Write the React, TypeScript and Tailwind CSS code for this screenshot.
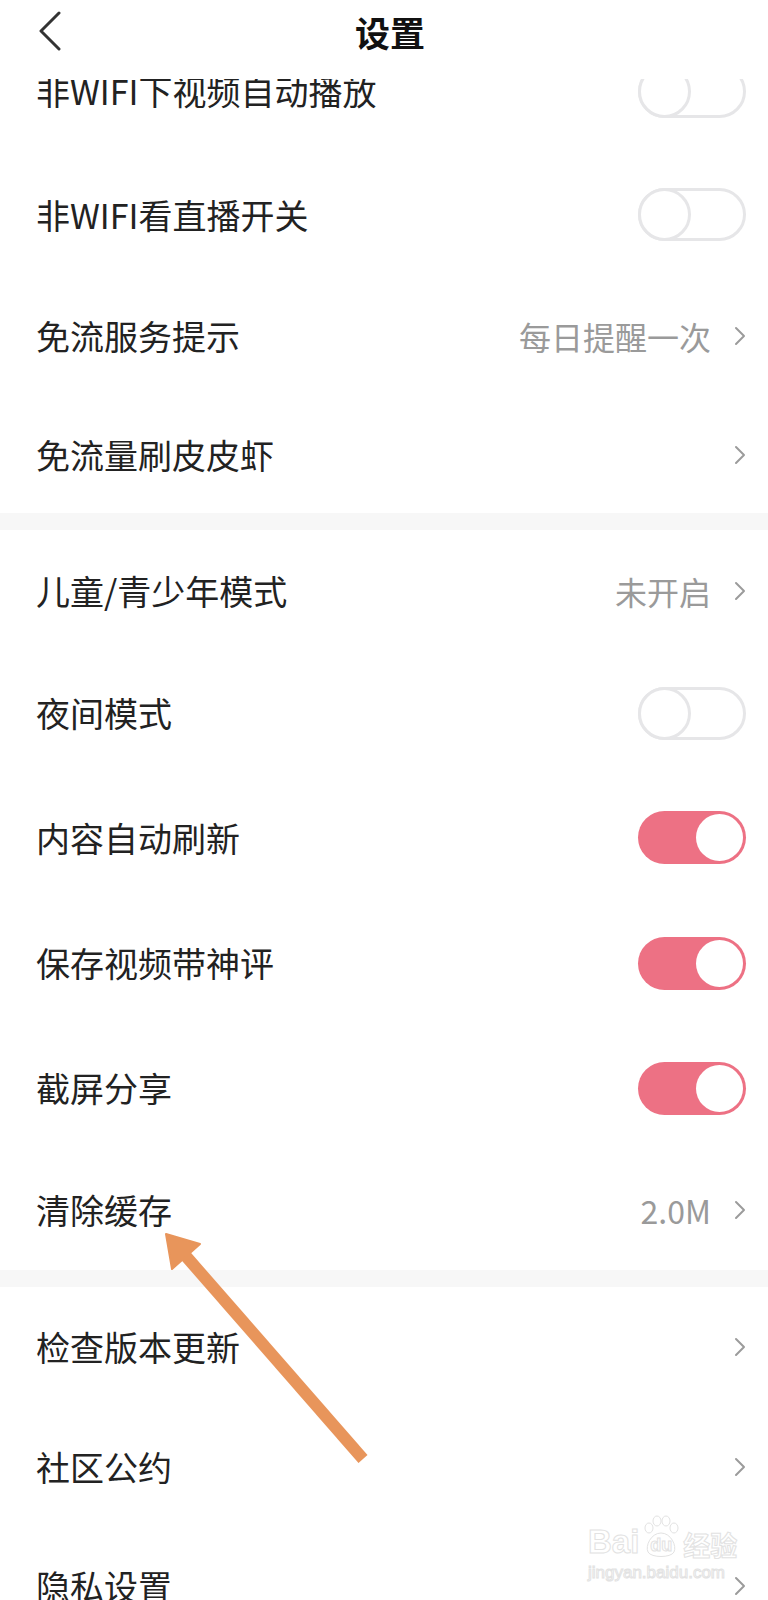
import React from "react";

type Row = {
  label: string;
  h: number;
  toggle?: boolean;
  on?: boolean;
  value?: string;
  arrow?: boolean;
};

const FONT = "font-['Noto_Sans_CJK_SC','Noto_Sans',sans-serif]";

const SECTIONS: Row[][] = [
  [
    { label: "非WIFI下视频自动播放", h: 124, toggle: true },
    { label: "非WIFI看直播开关", h: 123, toggle: true },
    { label: "免流服务提示", h: 120, value: "每日提醒一次", arrow: true },
    { label: "免流量刷皮皮虾", h: 117, arrow: true },
  ],
  [
    { label: "儿童/青少年模式", h: 121, value: "未开启", arrow: true },
    { label: "夜间模式", h: 124, toggle: true },
    { label: "内容自动刷新", h: 125, toggle: true, on: true },
    { label: "保存视频带神评", h: 126, toggle: true, on: true },
    { label: "截屏分享", h: 124, toggle: true, on: true },
    { label: "清除缓存", h: 120, value: "2.0M", arrow: true },
  ],
  [
    { label: "检查版本更新", h: 120, arrow: true },
    { label: "社区公约", h: 119, arrow: true },
    { label: "隐私设置", h: 120, arrow: true },
  ],
];

function Chevron() {
  return (
    <svg width="12" height="20" viewBox="0 0 12 20" fill="none">
      <path d="M2 2 L10 10 L2 18" stroke="#9b9b9b" strokeWidth="2" strokeLinecap="round" strokeLinejoin="round" />
    </svg>
  );
}

function Toggle({ on }: { on?: boolean }) {
  if (on) {
    return (
      <div className="relative h-[53px] w-[108px] rounded-full bg-[#ed7184]">
        <div className="absolute right-[3px] top-[3px] h-[47px] w-[47px] rounded-full bg-white" />
      </div>
    );
  }
  return (
    <div className="relative h-[53px] w-[108px] rounded-full border-[3px] border-[#e6e6e8] bg-white">
      <div className="absolute -left-[3px] -top-[3px] h-[53px] w-[53px] rounded-full border-[3px] border-[#e6e6e8] bg-white" />
    </div>
  );
}

function SettingRow({ row }: { row: Row }) {
  return (
    <div className="flex items-center justify-between pl-[36px] pr-[22px]" style={{ height: row.h }}>
      <span className="text-[34px] leading-none text-[#222222]">{row.label}</span>
      <div className="flex items-center">
        {row.value && <span className="mr-[23px] text-[32px] leading-none text-[#9a9a9a]">{row.value}</span>}
        {row.arrow && <Chevron />}
        {row.toggle && <Toggle on={row.on} />}
      </div>
    </div>
  );
}

function Watermark() {
  const stroke = "text-white [-webkit-text-stroke:1px_#e2e2e2]";
  return (
    <div className="pointer-events-none absolute left-[588px] top-[1514px] flex flex-col items-start">
      <div className="flex items-end">
        <span className={`font-['Liberation_Sans',sans-serif] text-[33px] font-bold leading-none ${stroke}`}>Bai</span>
        <div className="relative mx-[2px] flex h-[44px] w-[40px] items-end justify-center">
          <svg className="absolute left-0 top-0" width="40" height="44" viewBox="0 0 40 44" fill="white" stroke="#e2e2e2" strokeWidth="1">
            <ellipse cx="8" cy="14" rx="4" ry="5" />
            <ellipse cx="16" cy="7" rx="4" ry="5" />
            <ellipse cx="25" cy="7" rx="4" ry="5" />
            <ellipse cx="33" cy="14" rx="4" ry="5" />
            <path d="M20 19 C10 19 4 32 7 38 C10 44 30 44 33 38 C36 32 30 19 20 19 Z" />
          </svg>
          <span className={`relative mb-[4px] font-['Liberation_Sans',sans-serif] text-[18px] font-bold leading-none ${stroke}`}>du</span>
        </div>
        <span className={`font-['Noto_Sans_CJK_SC',sans-serif] text-[27px] font-bold leading-none ${stroke}`}>经验</span>
      </div>
      <span className={`mt-[6px] font-['Liberation_Sans',sans-serif] text-[17px] leading-none ${stroke}`}>jingyan.baidu.com</span>
    </div>
  );
}

export default function App() {
  return (
    <div className={`relative h-[1600px] w-[768px] overflow-hidden bg-white ${FONT}`}>
      <header className="absolute left-0 right-0 top-0 z-10 flex h-[79px] items-start bg-white pt-[11px]">
        <div className="w-[100px] pl-[38px]">
          <svg width="26" height="40" viewBox="0 0 26 40" fill="none">
            <path d="M21 2 L3 20 L21 38" stroke="#333333" strokeWidth="3" strokeLinecap="round" strokeLinejoin="round" />
          </svg>
        </div>
        <h1 className="flex-1 pt-[2px] text-center text-[35px] font-bold leading-[38px] text-[#111111]">设置</h1>
        <div className="w-[88px]" />
      </header>

      <div className="flex flex-col pt-[29px]">
        {SECTIONS.map((rows, i) => (
          <React.Fragment key={i}>
            {i > 0 && <div className="h-[17px] bg-[#f7f7f7]" />}
            {rows.map((row) => (
              <SettingRow key={row.label} row={row} />
            ))}
          </React.Fragment>
        ))}
      </div>

      <svg className="pointer-events-none absolute left-[140px] top-[1190px]" width="240" height="290" viewBox="0 0 240 290">
        <line x1="44" y1="64" x2="223" y2="269" stroke="#e8955b" strokeWidth="12" />
        <polygon points="26,44 32,79 60,54" fill="#e8955b" stroke="#e8955b" strokeWidth="2" strokeLinejoin="round" />
      </svg>

      <Watermark />
    </div>
  );
}
